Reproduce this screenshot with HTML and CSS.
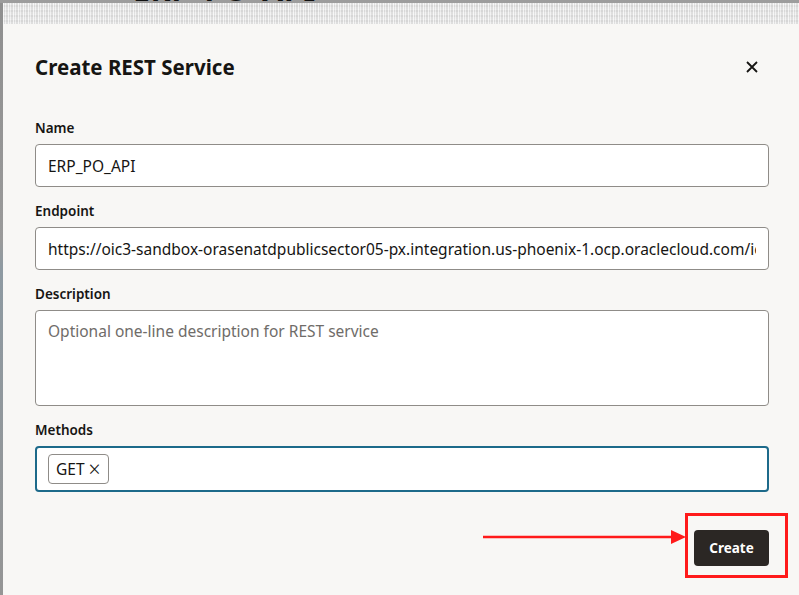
FILE: index.html
```html
<!DOCTYPE html>
<html>
<head>
<meta charset="utf-8">
<link rel="stylesheet" href="styles.css">
</head>
<body>
<div class="page-title">ERP_PO_API</div>
<div class="side-strip"></div>
<div class="dialog">
  <div class="texture"></div>
  <div class="dialog-inner">
    <div class="header">
      <h1 class="title">Create REST Service</h1>
      <button class="close" aria-label="Close">
        <svg width="14" height="14" viewBox="0 0 14 14"><path d="M2 2 L12 12 M12 2 L2 12" stroke="#161513" stroke-width="1.8" fill="none"/></svg>
      </button>
    </div>
    <div class="field">
      <div class="label">Name</div>
      <div class="input"><span class="value">ERP_PO_API</span></div>
    </div>
    <div class="field">
      <div class="label">Endpoint</div>
      <div class="input"><span class="value clip">https://oic3-sandbox-orasenatdpublicsector05-px.integration.us-phoenix-1.ocp.oraclecloud.com/ic/api/integration/v1/flows/rest/ERP_PO_API</span></div>
    </div>
    <div class="field">
      <div class="label">Description</div>
      <div class="textarea"><span class="placeholder">Optional one-line description for REST service</span></div>
    </div>
    <div class="field">
      <div class="label">Methods</div>
      <div class="input focused">
        <span class="chip">GET <span class="chip-x">×</span></span>
      </div>
    </div>
    <div class="footer">
      <button class="create">Create</button>
    </div>
  </div>
  <div class="annot-box"></div>
  <svg class="annot-arrow" width="204" height="16" viewBox="0 0 204 16">
    <line x1="0" y1="8" x2="190" y2="8" stroke="#ff1a1a" stroke-width="2.5"/>
    <polygon points="188,1 203,8 188,15" fill="#ff1a1a"/>
  </svg>
</div>
</body>
</html>
```

FILE: styles.css
```css
html, body {
  margin: 0;
  padding: 0;
  height: 100%;
}
body {
  background: #9d9d9d;
  font-family: "Noto Sans", "Liberation Sans", sans-serif;
  color: #161513;
  overflow: hidden;
  position: relative;
  width: 799px;
  height: 595px;
}
.page-title {
  position: absolute;
  left: 133px;
  top: -30px;
  font-size: 30px;
  line-height: 40px;
  font-weight: 700;
  color: #111;
  letter-spacing: 1px;
}
.side-strip {
  position: absolute;
  left: 0;
  top: 3px;
  width: 3px;
  height: 592px;
  background: linear-gradient(#8f8f8f, #9a9a9a 40%, #8e9aa2 45%, #959595 100%);
}
.dialog {
  position: absolute;
  left: 3px;
  top: 3px;
  right: 0;
  bottom: 0;
  background: #f8f7f5;
  display: flex;
  flex-direction: column;
}
.texture {
  height: 21px;
  background:
    repeating-linear-gradient(90deg, rgba(255,255,255,0.55) 0 1px, rgba(0,0,0,0.05) 1px 2px, rgba(255,255,255,0.3) 2px 3px, rgba(0,0,0,0.06) 3px 5px),
    repeating-linear-gradient(0deg, #ececec 0 2px, #e3e3e3 2px 4px, #efefef 4px 5px);
}
.dialog-inner {
  padding: 0 30px 0 32px;
  display: flex;
  flex-direction: column;
}
.header {
  display: flex;
  align-items: center;
  justify-content: space-between;
  height: 44px;
  margin-top: 21px;
  margin-bottom: 29px;
}
.title {
  margin: 0;
  font-size: 20.5px;
  font-weight: 700;
}
.close {
  border: 0;
  background: transparent;
  padding: 0;
  width: 20px;
  height: 20px;
  display: flex;
  align-items: center;
  justify-content: center;
  margin-right: 7px;
  cursor: pointer;
}
.field {
  display: flex;
  flex-direction: column;
  margin-bottom: 14px;
}
.label {
  font-size: 13.5px;
  font-weight: 600;
  line-height: 20px;
  margin-bottom: 6px;
}
.input, .textarea {
  background: #fff;
  border: 1px solid #8f8c88;
  border-radius: 4px;
  height: 43px;
  box-sizing: border-box;
  display: flex;
  align-items: center;
  padding: 0 12px;
  overflow: hidden;
}
.textarea {
  height: 96px;
  align-items: flex-start;
  padding-top: 9px;
}
.value {
  font-size: 15.5px;
  white-space: nowrap;
}
.clip {
  overflow: hidden;
}
.placeholder {
  font-size: 15.5px;
  color: #6f6c69;
  white-space: nowrap;
}
.input.focused {
  border: 2px solid #1d6a8a;
  height: 46px;
  padding: 0 11px;
}
.chip {
  display: inline-flex;
  align-items: center;
  height: 30px;
  box-sizing: border-box;
  border: 1px solid #8f8c88;
  border-radius: 4px;
  padding: 0 7px 0 7px;
  font-size: 15.5px;
  gap: 4px;
}
.chip-x {
  font-size: 21px;
  font-weight: 300;
  line-height: 1;
}
.footer {
  display: flex;
  justify-content: flex-end;
  margin-top: 24px;
}
.create {
  background: #2b2724;
  color: #fff;
  border: 0;
  border-radius: 4px;
  height: 36px;
  width: 75px;
  font-family: "Noto Sans", "Liberation Sans", sans-serif;
  font-size: 13.5px;
  font-weight: 700;
}
.annot-box {
  position: absolute;
  left: 682px;
  top: 510px;
  width: 97px;
  height: 59px;
  border: 3px solid #ff1a1a;
}
.annot-arrow {
  position: absolute;
  left: 480px;
  top: 526px;
}
```
